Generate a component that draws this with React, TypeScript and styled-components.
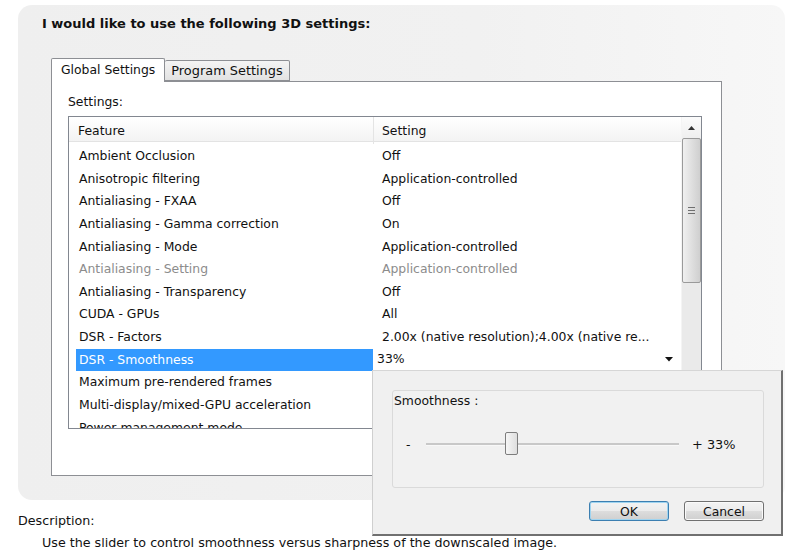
import React from "react"
import styled, { createGlobalStyle } from "styled-components"

const GlobalStyle = createGlobalStyle`
  body {
    margin: 0;
    background: #ffffff;
    font-family: "DejaVu Sans", Verdana, sans-serif;
    color: #111;
  }
`

interface Row {
  feature: string
  setting: string
  disabled?: boolean
  selected?: boolean
}

// rows below the selected one sit under the popup, their values are not shown
const rows: Row[] = [
  { feature: "Ambient Occlusion", setting: "Off" },
  { feature: "Anisotropic filtering", setting: "Application-controlled" },
  { feature: "Antialiasing - FXAA", setting: "Off" },
  { feature: "Antialiasing - Gamma correction", setting: "On" },
  { feature: "Antialiasing - Mode", setting: "Application-controlled" },
  { feature: "Antialiasing - Setting", setting: "Application-controlled", disabled: true },
  { feature: "Antialiasing - Transparency", setting: "Off" },
  { feature: "CUDA - GPUs", setting: "All" },
  { feature: "DSR - Factors", setting: "2.00x (native resolution);4.00x (native re..." },
  { feature: "DSR - Smoothness", setting: "33%", selected: true },
  { feature: "Maximum pre-rendered frames", setting: "" },
  { feature: "Multi-display/mixed-GPU acceleration", setting: "" },
  { feature: "Power management mode", setting: "" },
]

const Page = styled.div`
  position: relative;
  width: 800px;
  height: 550px;
  overflow: hidden;
  background: #ffffff;
`

const Panel = styled.div`
  margin: 5px 15px 0 18px;
  height: 495px;
  border-radius: 14px;
  background: linear-gradient(90deg, #efefef 0%, #f1f1f1 60%, #f7f7f7 100%);
  display: flex;
  flex-direction: column;
`

const Title = styled.h1`
  margin: 0;
  padding-left: 24px;
  height: 37px;
  line-height: 37px;
  font-size: 13px;
  font-weight: bold;
  color: #111;
`

const TabStrip = styled.div`
  display: flex;
  align-items: flex-end;
  margin: 15px 0 0 33px;
  height: 24px;
  position: relative;
  z-index: 1;
`

const Tab = styled.div<{ $active?: boolean }>`
  box-sizing: border-box;
  height: ${({ $active }) => ($active ? "24px" : "21px")};
  padding: 0 ${({ $active }) => ($active ? "9px" : "6px")};
  margin-bottom: ${({ $active }) => ($active ? "-1px" : "0")};
  line-height: ${({ $active }) => ($active ? "22px" : "20px")};
  font-size: ${({ $active }) => ($active ? "12.4px" : "12.9px")};
  border: 1px solid #8d8f94;
  border-bottom: ${({ $active }) => ($active ? "none" : "1px solid #8d8f94")};
  border-left: ${({ $active }) => ($active ? "1px solid #8d8f94" : "none")};
  background: ${({ $active }) =>
    $active ? "#ffffff" : "linear-gradient(#f4f4f4, #e2e2e2)"};
  border-radius: 2px 2px 0 0;
  color: #111;
`

const TabPanel = styled.div`
  box-sizing: border-box;
  margin-left: 33px;
  width: 671px;
  height: 395px;
  border: 1px solid #8d8f94;
  background: #ffffff;
  padding: 11px 0 0 16px;
`

const FieldLabel = styled.div`
  font-size: 12.4px;
  line-height: 18px;
  height: 23px;
`

const ListBox = styled.div`
  box-sizing: border-box;
  width: 634px;
  height: 313px;
  border: 1px solid #828790;
  display: flex;
  overflow: hidden;
`

const ListMain = styled.div`
  flex: 1;
  display: flex;
  flex-direction: column;
  overflow: hidden;
`

const HeaderRow = styled.div`
  display: grid;
  grid-template-columns: 304px 1fr;
  height: 25px;
  flex-shrink: 0;
  background: linear-gradient(#ffffff, #f3f3f3);
  border-bottom: 1px solid #e3e3e3;
  box-sizing: border-box;
`

const HeaderCell = styled.div<{ $divider?: boolean }>`
  font-size: 12.4px;
  line-height: 27px;
  padding-left: ${({ $divider }) => ($divider ? "8px" : "9px")};
  border-left: ${({ $divider }) => ($divider ? "1px solid #e4e4e4" : "none")};
`

const Rows = styled.div`
  padding-top: 3px;
`

const RowLine = styled.div`
  display: grid;
  grid-template-columns: 297px 1fr;
  height: 22.64px;
  padding-left: 7px;
  font-size: 12.4px;
  line-height: 22.64px;
  white-space: nowrap;
`

const FeatureCell = styled.div<{ $selected?: boolean; $disabled?: boolean }>`
  padding-left: 3px;
  overflow: hidden;
  background: ${({ $selected }) => ($selected ? "#3399ff" : "transparent")};
  color: ${({ $selected, $disabled }) =>
    $selected ? "#ffffff" : $disabled ? "#8c8c8c" : "#111"};
`

const SettingCell = styled.div<{ $disabled?: boolean }>`
  padding-left: 9px;
  overflow: hidden;
  color: ${({ $disabled }) => ($disabled ? "#8c8c8c" : "#111")};
`

const Combo = styled.div`
  display: flex;
  align-items: center;
  justify-content: space-between;
  padding: 0 8px 0 4px;
  background: #ffffff;
  border-bottom: 1px solid #d8d8d8;
  box-sizing: border-box;
  height: 22.64px;
`

const ScrollBar = styled.div`
  width: 19px;
  flex-shrink: 0;
  display: flex;
  flex-direction: column;
  background: #eaeaea;
  border-left: 1px solid #f4f4f4;
`

const ScrollButton = styled.div`
  height: 21px;
  display: flex;
  align-items: center;
  justify-content: center;
  background: linear-gradient(#fbfbfb, #efefef);
`

const ScrollThumb = styled.div`
  box-sizing: border-box;
  margin: 0;
  height: 145px;
  border: 1px solid #9a9a9a;
  border-radius: 2px;
  background: linear-gradient(90deg, #f0f0f0, #dcdcdc 60%, #cfcfcf);
  display: flex;
  align-items: center;
  justify-content: center;
`

const Grip = styled.div`
  width: 7px;
  height: 7px;
  background: repeating-linear-gradient(#6f6f6f 0 1px, transparent 1px 3px);
`

const Description = styled.div`
  padding: 12px 0 0 18px;
  font-size: 12.7px;
  line-height: 18px;
`

const DescriptionText = styled.div`
  padding: 4px 0 0 24px;
  line-height: 18px;
`

const Popup = styled.div`
  position: absolute;
  left: 372px;
  top: 370px;
  box-sizing: border-box;
  width: 411px;
  height: 166px;
  background: #f0f0f0;
  border-top: 1px solid #d6d6d6;
  border-left: 1px solid #cfcfcf;
  border-right: 2px solid #707070;
  border-bottom: 2px solid #707070;
  padding: 19px 17px 0 19px;
  display: flex;
  flex-direction: column;
`

const Group = styled.div`
  box-sizing: border-box;
  height: 98px;
  border: 1px solid #dadada;
  border-radius: 3px;
  background: #f1f1f1;
  padding: 1px 0 0 1px;
  font-size: 12.4px;
`

const GroupLabel = styled.div`
  line-height: 18px;
`

const SliderRow = styled.div`
  display: flex;
  align-items: center;
  margin-top: 22px;
  height: 24px;
`

const SliderEnd = styled.div<{ $width: number }>`
  width: ${({ $width }) => $width}px;
  padding-left: 12px;
  box-sizing: border-box;
  font-size: 12.4px;
`

const Track = styled.div`
  position: relative;
  width: 253px;
  height: 24px;
  margin-right: 13px;
  &::before {
    content: "";
    position: absolute;
    left: 0;
    right: 0;
    top: 11px;
    height: 2px;
    background: #c8c8c8;
    border-bottom: 1px solid #f8f8f8;
  }
`

const Thumb = styled.div`
  position: absolute;
  top: 0;
  width: 13px;
  height: 23px;
  box-sizing: border-box;
  border: 1px solid #7d7d7d;
  border-radius: 2px;
  background: linear-gradient(90deg, #f6f6f6, #dedede);
`

const PlusValue = styled.div`
  font-size: 12.9px;
`

const ButtonRow = styled.div`
  display: flex;
  justify-content: flex-end;
  gap: 15px;
  margin-top: 13px;
`

const Button = styled.button<{ $default?: boolean }>`
  box-sizing: border-box;
  width: 80px;
  height: 20px;
  padding: 0;
  font-family: "DejaVu Sans", Verdana, sans-serif;
  font-size: 12.4px;
  color: #111;
  border-radius: 3px;
  border: 1px solid ${({ $default }) => ($default ? "#3c7fb1" : "#707070")};
  box-shadow: ${({ $default }) => ($default ? "inset 0 0 0 1px #9fd4f0" : "inset 0 0 0 1px #fafafa")};
  background: linear-gradient(#f3f3f3 0%, #ebebeb 50%, #dddddd 51%, #cfcfcf 100%);
`

const ArrowDown = () => (
  <svg width="8" height="5" viewBox="0 0 8 5">
    <path d="M0 0 H8 L4 4.5 Z" fill="#111" />
  </svg>
)

const ArrowUp = () => (
  <svg width="7" height="4" viewBox="0 0 7 4">
    <path d="M0 4 H7 L3.5 0 Z" fill="#333" />
  </svg>
)

const App: React.FC = () => {
  return (
    <Page>
      <GlobalStyle />
      <Panel>
        <Title>I would like to use the following 3D settings:</Title>
        <TabStrip>
          <Tab $active>Global Settings</Tab>
          <Tab>Program Settings</Tab>
        </TabStrip>
        <TabPanel>
          <FieldLabel>Settings:</FieldLabel>
          <ListBox>
            <ListMain>
              <HeaderRow>
                <HeaderCell>Feature</HeaderCell>
                <HeaderCell $divider>Setting</HeaderCell>
              </HeaderRow>
              <Rows>
                {rows.map((r) => (
                  <RowLine key={r.feature}>
                    <FeatureCell $selected={r.selected} $disabled={r.disabled}>
                      {r.feature}
                    </FeatureCell>
                    {r.selected ? (
                      <Combo>
                        <span>{r.setting}</span>
                        <ArrowDown />
                      </Combo>
                    ) : (
                      <SettingCell $disabled={r.disabled}>{r.setting}</SettingCell>
                    )}
                  </RowLine>
                ))}
              </Rows>
            </ListMain>
            <ScrollBar>
              <ScrollButton>
                <ArrowUp />
              </ScrollButton>
              <ScrollThumb>
                <Grip />
              </ScrollThumb>
            </ScrollBar>
          </ListBox>
        </TabPanel>
      </Panel>
      <Description>
        Description:
        <DescriptionText>
          Use the slider to control smoothness versus sharpness of the downscaled image.
        </DescriptionText>
      </Description>
      <Popup>
        <Group>
          <GroupLabel>Smoothness :</GroupLabel>
          <SliderRow>
            <SliderEnd $width={32}>-</SliderEnd>
            <Track>
              <Thumb style={{ left: `${0.33 * 240}px` }} />
            </Track>
            <PlusValue>+ 33%</PlusValue>
          </SliderRow>
        </Group>
        <ButtonRow>
          <Button $default>OK</Button>
          <Button>Cancel</Button>
        </ButtonRow>
      </Popup>
    </Page>
  )
}

export default App
